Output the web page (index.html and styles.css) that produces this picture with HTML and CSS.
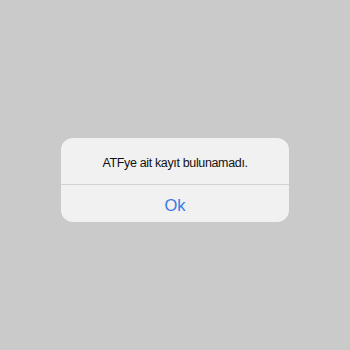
FILE: index.html
```html
<!DOCTYPE html>
<html>
<head>
<meta charset="utf-8">
<link rel="stylesheet" href="styles.css">
</head>
<body>
<div class="screen">
  <div class="alert">
    <div class="message">ATFye ait kayıt bulunamadı.</div>
    <div class="actions"><button class="btn">Ok</button></div>
  </div>
</div>
</body>
</html>
```
FILE: styles.css
```css
html, body {
  margin: 0;
  padding: 0;
}
body {
  width: 350px;
  height: 350px;
  background: #cacaca;
  font-family: "Liberation Sans", Arial, sans-serif;
}
.screen {
  width: 350px;
  height: 350px;
  display: flex;
  justify-content: center;
  padding-top: 138px;
  box-sizing: border-box;
}
.alert {
  width: 228px;
  height: 84px;
  background: #f1f1f1;
  border-radius: 12px;
  display: flex;
  flex-direction: column;
}
.message {
  height: 47px;
  box-sizing: border-box;
  border-bottom: 1px solid #d3d3d3;
  display: flex;
  align-items: center;
  justify-content: center;
  font-size: 12.5px;
  letter-spacing: -0.35px;
  color: #111;
  padding-top: 4px;
}
.actions {
  flex: 1;
  display: flex;
}
.btn {
  flex: 1;
  border: 0;
  background: transparent;
  font-family: "Liberation Sans", Arial, sans-serif;
  font-size: 16.5px;
  color: #3b7ae8;
  padding: 4px 0 0;
}
```
